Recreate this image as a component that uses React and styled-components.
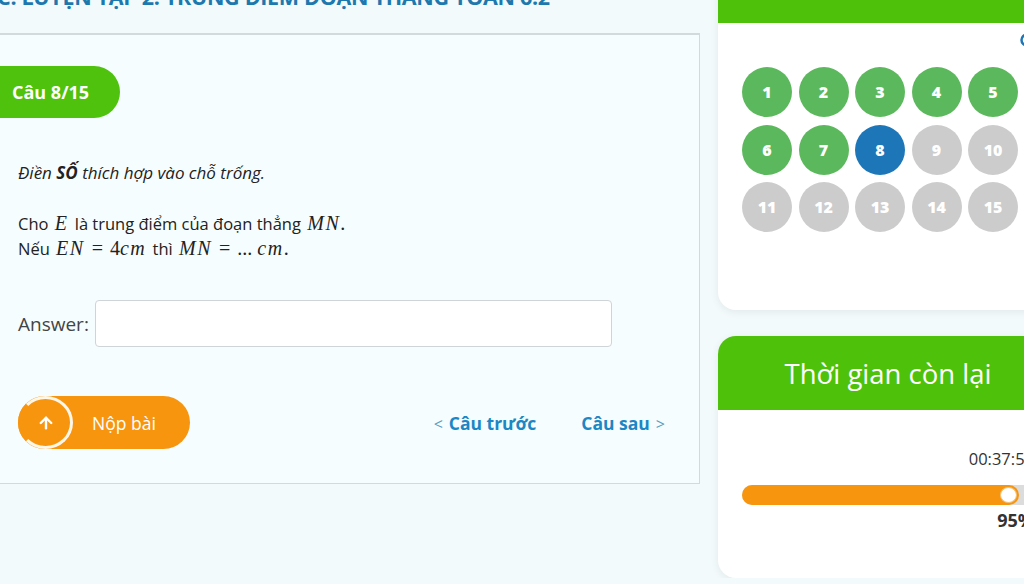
import React from 'react';
import styled, { createGlobalStyle } from 'styled-components';
import { ArrowUp } from 'lucide-react';

const GlobalStyle = createGlobalStyle`
      html, body {
            margin: 0;
            padding: 0;
            overflow: hidden;
            background: #f2fafc;
            font-family: "Open Sans", "Liberation Sans", sans-serif;
            color: #222;
      }
      * { box-sizing: border-box; }
`

const Page = styled.div`
      display: flex;
      gap: 18px;
      width: 1100px;
      margin: -17px 0 0 -20px;
`

const Main = styled.div`
      width: 720px;
      flex-shrink: 0;
`

const Title = styled.h2`
      margin: 0 0 22px 17px;
      font-size: 21.5px;
      line-height: 28px;
      font-weight: 700;
      color: #1d78ae;
      letter-spacing: -0.3px;
      white-space: nowrap;
`

const Panel = styled.div`
      background: #f6fdfe;
      border: 1px solid #d3dadd;
      border-top: 2px solid #d3dadd;
      padding: 31px 0 34px 0;
`

const Badge = styled.div`
      display: inline-flex;
      align-items: center;
      height: 52px;
      width: 139px;
      padding-left: 31px;
      background: #4ec20d;
      color: #fff;
      font-weight: 700;
      font-size: 18px;
      border-radius: 0 26px 26px 0;
`

const Body = styled.div`
      padding: 0 28px 0 37px;
`

const Hint = styled.p`
      margin: 43px 0 0;
      font-size: 17px;
      line-height: 24px;
      font-style: italic;
      b { font-weight: 700; }
`

const Question = styled.p`
      margin: 26px 0 0;
      font-size: 16.5px;
      line-height: 25px;
`

const Math = styled.span`
      font-family: "Liberation Serif", "DejaVu Serif", serif;
      font-size: 20px;
      margin: 0 2px;
      i { font-style: italic; letter-spacing: 1.5px; }
      .op { margin: 0 7px; }
`

const AnswerRow = styled.div`
      display: flex;
      align-items: center;
      gap: 6px;
      margin-top: 39px;
      label {
            font-size: 19px;
            color: #444;
      }
`

const Input = styled.input`
      width: 517px;
      height: 47px;
      border: 1px solid #cfd4d8;
      border-radius: 4px;
      background: #fff;
`

const Actions = styled.div`
      display: flex;
      align-items: center;
      margin-top: 49px;
`

const Submit = styled.button`
      display: flex;
      align-items: center;
      width: 172px;
      height: 53px;
      padding: 0;
      border: none;
      border-radius: 27px;
      background: #f8950f;
      color: #fff;
      font-family: inherit;
      font-size: 17.5px;
      cursor: pointer;
`

const SubmitIcon = styled.span`
      display: flex;
      align-items: center;
      justify-content: center;
      width: 55px;
      height: 53px;
      border-radius: 50%;
      border: 3px solid #fff7ea;
      border-left-color: #f8950f;
      background: #f8950f;
      margin-right: 19px;
`

const NavLinks = styled.div`
      display: flex;
      gap: 45px;
      margin-left: auto;
`

const NavLink = styled.a`
      color: #1b87c4;
      font-weight: 700;
      font-size: 17.5px;
      text-decoration: none;
      span {
            font-weight: 400;
            color: #5a9dc2;
            font-size: 16px;
            margin: 0 6px;
      }
`

const Side = styled.div`
      width: 340px;
      flex-shrink: 0;
      display: flex;
      flex-direction: column;
      gap: 26px;
`

const Card = styled.div`
      background: #fff;
      border-radius: ${p => p.$top ? '18px 0 0 18px' : '0 0 0 18px'};
      box-shadow: 0 2px 8px rgba(0, 0, 0, 0.07);
      overflow: hidden;
`

const CardHeader = styled.div`
      height: ${p => p.$h}px;
      background: #4ec20a;
      color: #fff;
      font-size: 27.5px;
      display: flex;
      align-items: center;
      justify-content: center;
`

const ListBody = styled.div`
      height: 287px;
      padding: 10px 24px 0;
`

const Legend = styled.div`
      display: flex;
      justify-content: flex-end;
      height: 14px;
      margin-bottom: 20px;
`

const Grid = styled.div`
      display: grid;
      grid-template-columns: repeat(5, 50px);
      column-gap: 6.5px;
      row-gap: 7.5px;
`

const Dot = styled.div`
      width: 50px;
      height: 50px;
      border-radius: 50%;
      display: flex;
      align-items: center;
      justify-content: center;
      color: #fff;
      font-weight: 800;
      font-size: 16px;
      background: ${p => p.$state === 'done' ? '#5cb85c' : p.$state === 'current' ? '#1d76b8' : '#cccccc'};
`

const TimerBody = styled.div`
      height: 168px;
      padding: 38px 24px 0;
      text-align: right;
`

const Clock = styled.div`
      font-size: 16.5px;
      line-height: 22px;
      color: #333;
`

const Track = styled.div`
      position: relative;
      height: 20px;
      margin-top: 15px;
      border-radius: 10px;
      background: #dcdcdc;
`

const Fill = styled.div`
      height: 100%;
      border-radius: 10px;
      background: #f8950f;
`

const Knob = styled.div`
      position: absolute;
      top: 2px;
      width: 17px;
      height: 16px;
      border-radius: 50%;
      background: #fff;
      border: 1px solid #f3c27a;
`

const Percent = styled.div`
      font-weight: 700;
      font-size: 18px;
      line-height: 30px;
      color: #333;
`

const states = Array.from({ length: 15 }, (_, i) => i < 7 ? 'done' : i === 7 ? 'current' : 'todo');

const App = () => {
      const pct = 95;
      return (
            <>
                  <GlobalStyle />
                  <Page>
                        <Main>
                              <Title>C. LUYỆN TẬP 2. TRUNG ĐIỂM ĐOẠN THẲNG TOÁN 6.2</Title>
                              <Panel>
                                    <Badge>Câu 8/15</Badge>
                                    <Body>
                                          <Hint>Điền <b>SỐ</b> thích hợp vào chỗ trống.</Hint>
                                          <Question>
                                                Cho <Math><i>E</i></Math> là trung điểm của đoạn thẳng <Math><i>MN</i>.</Math>
                                                <br />
                                                Nếu <Math><i>EN</i><span className="op">=</span>4<i>cm</i></Math> thì <Math><i>MN</i><span className="op">=</span>... <i>cm</i>.</Math>
                                          </Question>
                                          <AnswerRow>
                                                <label>Answer:</label>
                                                <Input type="text" />
                                          </AnswerRow>
                                          <Actions>
                                                <Submit>
                                                      <SubmitIcon><ArrowUp size={18} strokeWidth={3.2} /></SubmitIcon>
                                                      Nộp bài
                                                </Submit>
                                                <NavLinks>
                                                      <NavLink href="#"><span>&lt;</span>Câu trước</NavLink>
                                                      <NavLink href="#">Câu sau<span>&gt;</span></NavLink>
                                                </NavLinks>
                                          </Actions>
                                    </Body>
                              </Panel>
                        </Main>
                        <Side>
                              <Card>
                                    <CardHeader $h={40} />
                                    <ListBody>
                                          <Legend>
                                                <svg width="14" height="14" viewBox="0 0 14 14">
                                                      <circle cx="7" cy="7" r="5.5" fill="none" stroke="#1d76b8" strokeWidth="2.5" />
                                                </svg>
                                          </Legend>
                                          <Grid>
                                                {states.map((s, i) => <Dot key={i} $state={s}>{i + 1}</Dot>)}
                                          </Grid>
                                    </ListBody>
                              </Card>
                              <Card $top>
                                    <CardHeader $h={74}>Thời gian còn lại</CardHeader>
                                    <TimerBody>
                                          <Clock>00:37:59</Clock>
                                          <Track>
                                                <Fill style={{ width: pct + '%' }} />
                                                <Knob style={{ left: `calc(${pct}% - 19px)` }} />
                                          </Track>
                                          <Percent>{pct}%</Percent>
                                    </TimerBody>
                              </Card>
                        </Side>
                  </Page>
            </>
      );
}

export default App;
